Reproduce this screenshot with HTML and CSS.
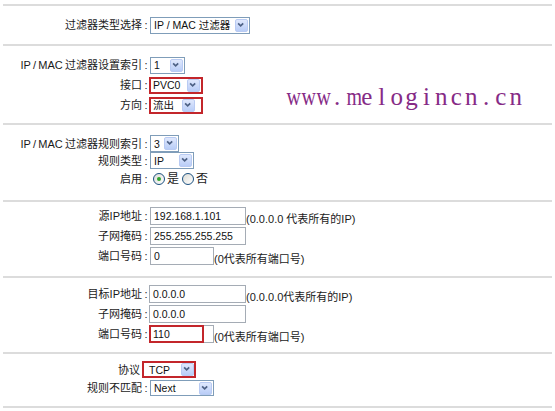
FILE: index.html
```html
<!DOCTYPE html>
<html>
<head>
<meta charset="utf-8">
<link rel="stylesheet" href="styles.css">
</head>
<body>
<div class="page">
  <div class="sec s1">
    <div class="row">
      <span class="lbl">过滤器类型选择</span><span class="colon">:</span>
      <span class="ctl"><span class="sel w100"><span class="val">IP / MAC 过滤器</span><span class="btn"><svg viewBox="0 0 13 13"><polyline points="3.5,5 6.5,8 9.5,5"/></svg></span></span></span>
    </div>
  </div>

  <div class="sec s2">
    <div class="row">
      <span class="lbl">IP / MAC 过滤器设置索引</span><span class="colon">:</span>
      <span class="ctl"><span class="sel w35"><span class="val">1</span><span class="btn"><svg viewBox="0 0 13 13"><polyline points="3.5,5 6.5,8 9.5,5"/></svg></span></span></span>
    </div>
    <div class="row">
      <span class="lbl">接口</span><span class="colon">:</span>
      <span class="ctl"><span class="red w54"><span class="sel bare w49"><span class="val">PVC0</span><span class="btn"><svg viewBox="0 0 13 13"><polyline points="3.5,5 6.5,8 9.5,5"/></svg></span></span></span></span>
    </div>
    <div class="row">
      <span class="lbl">方向</span><span class="colon">:</span>
      <span class="ctl"><span class="red w54"><span class="sel bare w44"><span class="val">流出</span><span class="btn"><svg viewBox="0 0 13 13"><polyline points="3.5,5 6.5,8 9.5,5"/></svg></span></span></span></span>
    </div>
  </div>

  <div class="sec s3">
    <div class="row h17">
      <span class="lbl">IP / MAC 过滤器规则索引</span><span class="colon">:</span>
      <span class="ctl"><span class="sel w29"><span class="val">3</span><span class="btn"><svg viewBox="0 0 13 13"><polyline points="3.5,5 6.5,8 9.5,5"/></svg></span></span></span>
    </div>
    <div class="row h17">
      <span class="lbl">规则类型</span><span class="colon">:</span>
      <span class="ctl"><span class="sel w44"><span class="val">IP</span><span class="btn"><svg viewBox="0 0 13 13"><polyline points="3.5,5 6.5,8 9.5,5"/></svg></span></span></span>
    </div>
    <div class="row">
      <span class="lbl">启用</span><span class="colon">:</span>
      <span class="ctl radios"><span class="radio on"></span><span class="rtext">是</span><span class="radio"></span><span class="rtext">否</span></span>
    </div>
  </div>

  <div class="sec s4">
    <div class="row">
      <span class="lbl">源IP地址</span><span class="colon">:</span>
      <span class="ctl"><span class="inp w96">192.168.1.101</span><span class="hint">(0.0.0.0 代表所有的IP)</span></span>
    </div>
    <div class="row">
      <span class="lbl">子网掩码</span><span class="colon">:</span>
      <span class="ctl"><span class="inp w96">255.255.255.255</span></span>
    </div>
    <div class="row">
      <span class="lbl">端口号码</span><span class="colon">:</span>
      <span class="ctl"><span class="inp w64">0</span><span class="hint">(0代表所有端口号)</span></span>
    </div>
  </div>

  <div class="sec s5">
    <div class="row">
      <span class="lbl">目标IP地址</span><span class="colon">:</span>
      <span class="ctl"><span class="inp w97 shift">0.0.0.0</span><span class="hint">(0.0.0.0代表所有的IP)</span></span>
    </div>
    <div class="row">
      <span class="lbl">子网掩码</span><span class="colon">:</span>
      <span class="ctl"><span class="inp w97 shift">0.0.0.0</span></span>
    </div>
    <div class="row">
      <span class="lbl">端口号码</span><span class="colon">:</span>
      <span class="ctl"><span class="inp w65 shift mark">110</span><span class="hint">(0代表所有端口号)</span></span>
    </div>
  </div>

  <div class="sec s6">
    <div class="row h19">
      <span class="lbl nocolon">协议</span>
      <span class="ctl wide"><span class="red w54"><span class="sel bare w50"><span class="val pl">TCP</span><span class="btn"><svg viewBox="0 0 13 13"><polyline points="3.5,5 6.5,8 9.5,5"/></svg></span></span></span></span>
    </div>
    <div class="row h18">
      <span class="lbl">规则不匹配</span><span class="colon">:</span>
      <span class="ctl"><span class="sel w64 h16"><span class="val">Next</span><span class="btn"><svg viewBox="0 0 13 13"><polyline points="3.5,5 6.5,8 9.5,5"/></svg></span></span></span>
    </div>
  </div>
  <div class="endline"></div>
</div>
<div class="watermark"><span class="x">w</span><span class="x">w</span><span class="x">w</span><span>.</span><span class="x">m</span><span>e</span><span>l</span><span>o</span><span>g</span><span>i</span><span>n</span><span>c</span><span>n</span><span>.</span><span>c</span><span>n</span></div>
</body>
</html>
```

FILE: styles.css
```css
html, body {
  margin: 0;
  padding: 0;
  background: #ffffff;
}
body {
  font-family: "Liberation Sans", "Noto Sans CJK SC", sans-serif;
  font-size: 11px;
  color: #1a1a1a;
  position: relative;
  width: 555px;
  height: 411px;
  overflow: hidden;
}
.page {
  padding: 4px 0 0 3px;
  width: 549px;
}
.sec {
  border-top: 2px solid #dcdcdc;
}
.s1 { padding: 9px 0 9px; }
.s2 { padding: 9px 0 8px; }
.s3 { padding: 10px 0 11px; }
.s4 { padding: 4px 0 10px; }
.s5 { padding: 6px 0 8px; }
.s6 { padding: 6px 0 9px; }
.endline {
  border-top: 2px solid #dcdcdc;
}
.row {
  display: grid;
  grid-template-columns: 139px 8px auto;
  align-items: center;
  height: 20px;
}
.row.h17 { height: 17px; }
.row.h19 { height: 19px; }
.row.h18 { height: 18px; }
.lbl {
  text-align: right;
  white-space: nowrap;
  line-height: 14px;
  word-spacing: -0.8px;
}
.lbl.nocolon { padding-right: 2px; }
.colon {
  text-align: center;
  line-height: 14px;
}
.ctl {
  display: flex;
  align-items: center;
  grid-column: 3;
}
.ctl.wide {
  grid-column: 2 / 4;
  padding-left: 1px;
}
/* select boxes */
.sel {
  display: inline-flex;
  align-items: center;
  box-sizing: border-box;
  height: 17px;
  border: 1px solid #7f9db9;
  background: #fff;
  padding-left: 3px;
}
.sel.h16 { height: 16px; }
.sel.bare {
  border: none;
  height: 13px;
  padding-left: 2px;
}
.sel .val {
  flex: 1;
  font-size: 10.5px;
  line-height: 12px;
  white-space: nowrap;
  color: #111;
}
.sel .val.pl { padding-left: 3px; }
.btn {
  width: 13px;
  height: 13px;
  margin-right: 1px;
  box-sizing: border-box;
  border: 1px solid #b9cbf3;
  border-radius: 2px;
  background: linear-gradient(#dfe8fd, #b9cdf7);
  display: flex;
}
.btn svg {
  width: 11px;
  height: 11px;
}
.btn polyline {
  fill: none;
  stroke: #4d6185;
  stroke-width: 2;
  transform: translate(-1px, -1px);
}
.bare .btn { margin-right: 0; }
.red {
  display: inline-flex;
  align-items: center;
  box-sizing: border-box;
  height: 17px;
  border: 2px solid #c3262b;
  background: #fff;
}
.w29 { width: 29px; }
.w35 { width: 35px; }
.w44 { width: 44px; }
.w49 { width: 49px; }
.w50 { width: 50px; }
.w54 { width: 54px; }
.w64 { width: 64px; }
.w65 { width: 65px; }
.w96 { width: 96px; }
.w97 { width: 97px; }
.w100 { width: 100px; }
.ctl > .red { margin-left: -1px; }
/* text inputs */
.inp {
  position: relative;
  display: inline-flex;
  align-items: center;
  box-sizing: border-box;
  height: 18px;
  border: 1px solid #a5acb5;
  padding-left: 3px;
  font-size: 10.5px;
  color: #111;
  white-space: nowrap;
}
.inp.shift { margin-left: -1px; }
.inp.mark::after {
  content: "";
  position: absolute;
  left: -1px;
  top: -1px;
  bottom: -1px;
  width: 55px;
  border: 2px solid #c3262b;
  box-sizing: border-box;
}
.hint {
  align-self: flex-end;
  line-height: 13px;
  margin-bottom: -1px;
  white-space: nowrap;
}
/* radios */
.radios { padding-left: 3px; }
.radio {
  width: 12px;
  height: 12px;
  box-sizing: border-box;
  border-radius: 50%;
  border: 1px solid #1c5180;
  background: linear-gradient(135deg, #dcdcd6, #ffffff);
  display: inline-flex;
  align-items: center;
  justify-content: center;
}
.radio.on::after {
  content: "";
  width: 4px;
  height: 4px;
  border-radius: 50%;
  background: #2fa52f;
}
.rtext {
  font-size: 12px;
  margin: 0 3px 0 2px;
  line-height: 14px;
}
.watermark {
  position: absolute;
  left: 285px;
  top: 84px;
  display: flex;
  font-family: "Liberation Serif", serif;
  font-size: 25px;
  line-height: 25px;
  color: #862b86;
  white-space: nowrap;
}
.watermark span {
  display: inline-block;
  width: 14.9px;
  text-align: center;
}
.watermark span.x {
  transform: scaleX(0.8);
}
```
